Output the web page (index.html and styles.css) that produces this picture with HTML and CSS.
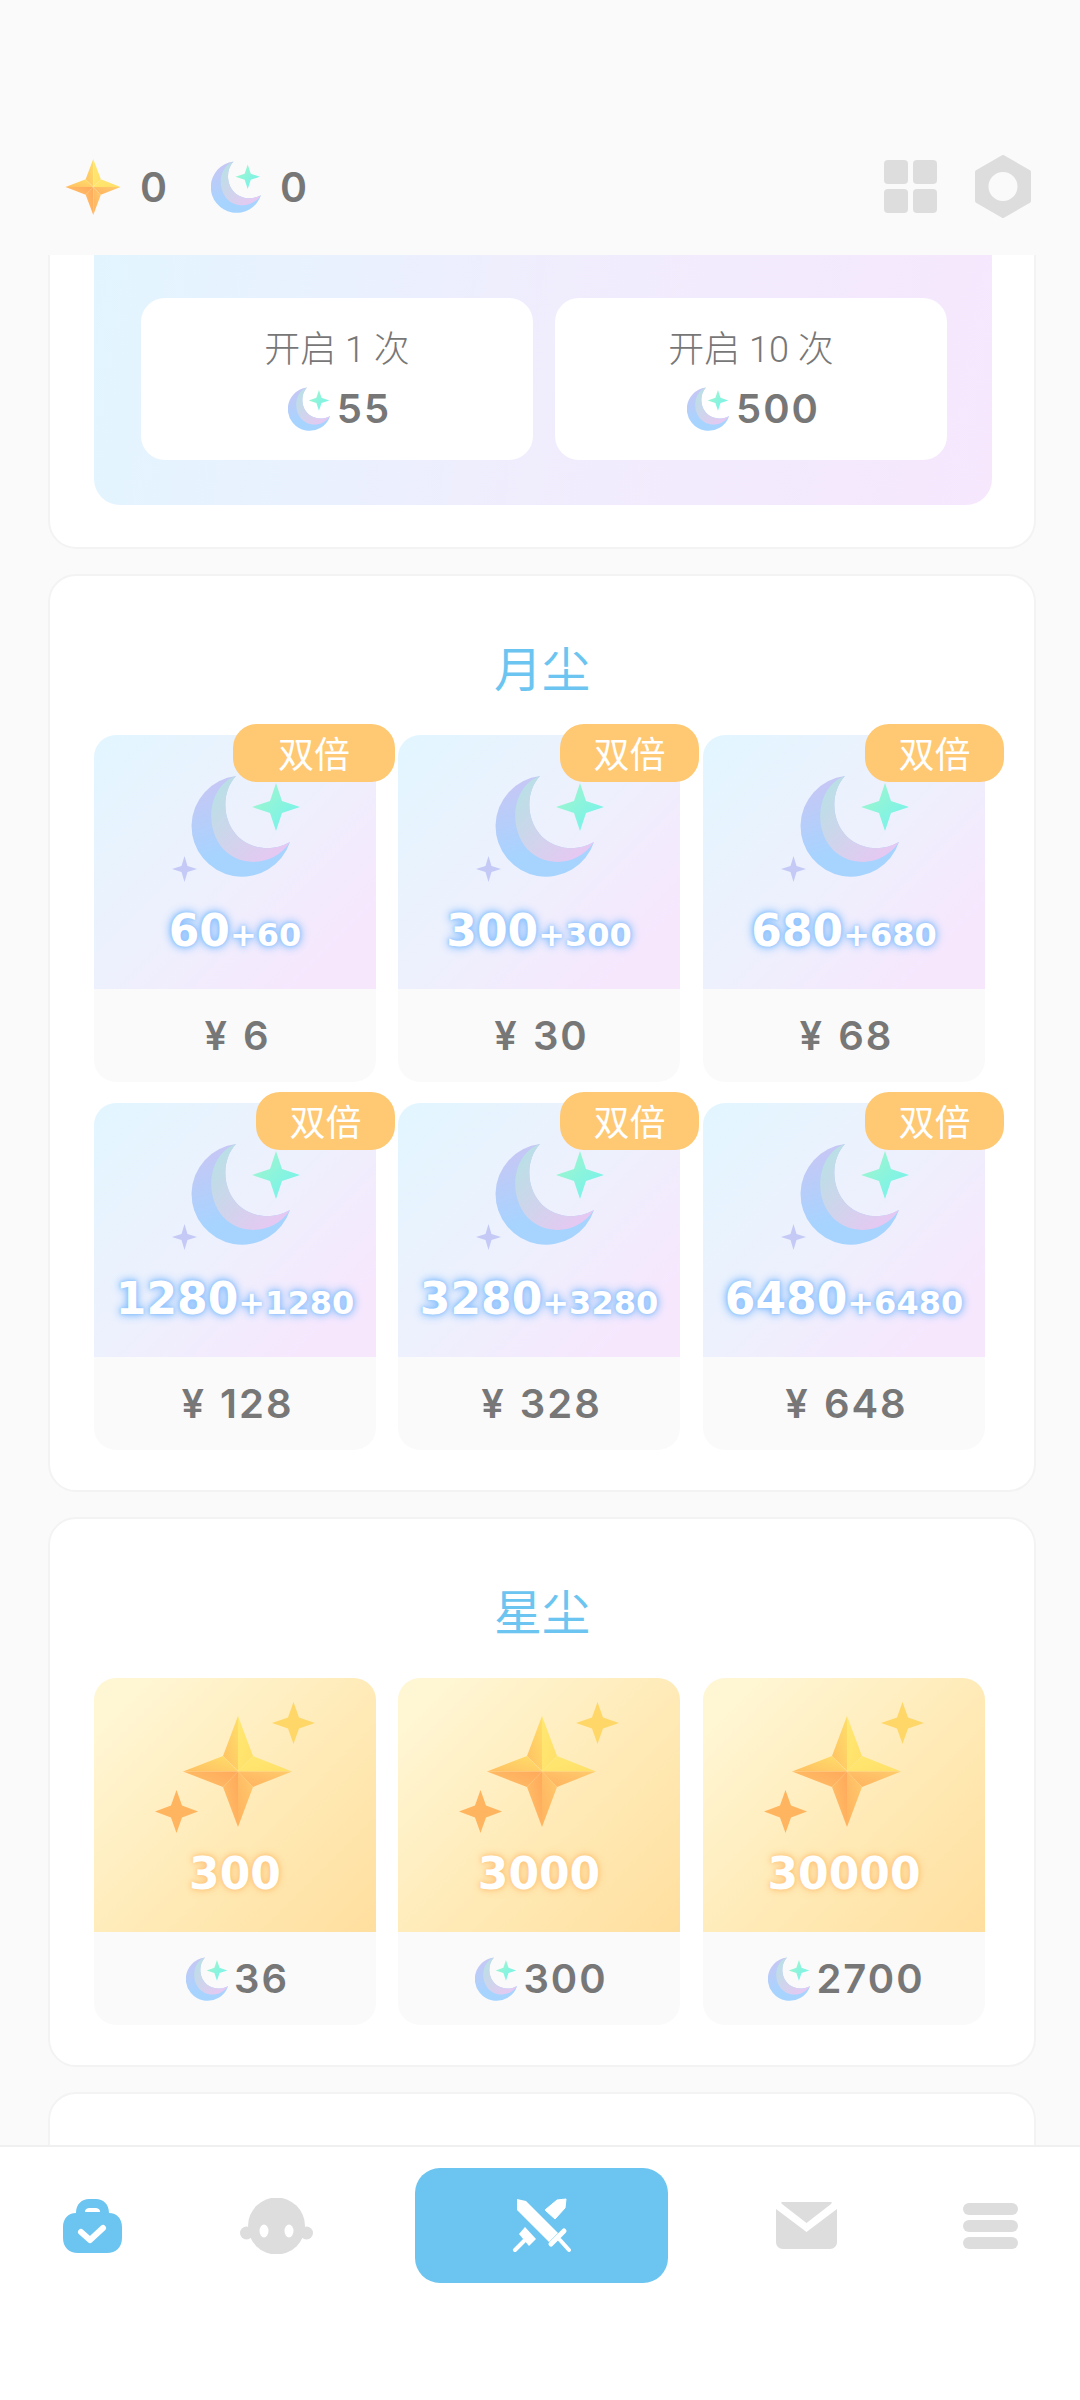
FILE: index.html
```html
<!DOCTYPE html>
<html lang="zh-CN">
<head>
    <meta charset="UTF-8">
    <meta name="viewport" content="width=device-width, initial-scale=1.0">
    <title>商店</title>
    <link rel="stylesheet" href="styles.css">
</head>
<body>
    <svg class="defs" aria-hidden="true">
        <defs>
            <linearGradient id="moonOuter" x1="0.2" y1="0" x2="0.5" y2="1">
                <stop offset="0" stop-color="#c9c6f4"/>
                <stop offset="0.75" stop-color="#a6d4ff"/>
            </linearGradient>
            <linearGradient id="moonInner" x1="0.1" y1="0.1" x2="0.85" y2="0.9">
                <stop offset="0" stop-color="#b9e0e6"/>
                <stop offset="1" stop-color="#e6c8f2"/>
            </linearGradient>
            <linearGradient id="spark" x1="0" y1="0" x2="1" y2="1">
                <stop offset="0" stop-color="#a6f6c8"/>
                <stop offset="1" stop-color="#6ff2f2"/>
            </linearGradient>
            <linearGradient id="goldTL" x1="0" y1="1" x2="1" y2="0">
                <stop offset="0" stop-color="#ffbf63"/>
                <stop offset="1" stop-color="#ffde69"/>
            </linearGradient>
            <linearGradient id="goldTR" x1="0" y1="0" x2="1" y2="1">
                <stop offset="0" stop-color="#ffe872"/>
                <stop offset="1" stop-color="#ffdf68"/>
            </linearGradient>
            <linearGradient id="goldBL" x1="1" y1="0" x2="0" y2="0.6">
                <stop offset="0" stop-color="#ffa95b"/>
                <stop offset="1" stop-color="#ffbe66"/>
            </linearGradient>
            <linearGradient id="goldBR" x1="1" y1="0" x2="0" y2="1">
                <stop offset="0" stop-color="#ffca6c"/>
                <stop offset="1" stop-color="#ffb25f"/>
            </linearGradient>
            <path id="moonBody" d="M64 1A50.5 50.5 0 1 0 118 67C102 76 84 75 70 65C50 50 48 18 64 1Z" fill="url(#moonOuter)"/>
            <path id="moonLayer" d="M64 1C40 9 31 45 48 70C63 92 100 94 118 67C102 76 84 75 70 65C50 50 48 18 64 1Z" fill="url(#moonInner)"/>
            <path id="sparkShape" d="M24 0L30 18L48 24L30 30L24 48L18 30L0 24L18 18Z"/>
            <symbol id="moonArt" viewBox="0 0 130 107">
                <use href="#moonBody"/>
                <use href="#moonLayer"/>
                <use href="#sparkShape" x="80" y="8" fill="url(#spark)"/>
                <path d="M12.5 81L15.5 91L25 94L15.5 97L12.5 107L9.5 97L0 94L9.5 91Z" fill="#c4c9f6"/>
            </symbol>
            <symbol id="moonIcon" viewBox="20 0 100 102">
                <use href="#moonBody"/>
                <use href="#moonLayer"/>
                <use href="#sparkShape" x="68" y="7" fill="url(#spark)"/>
            </symbol>
            <g id="goldStar">
                <path d="M55 0L40 40L55 55Z" fill="url(#goldTL)"/>
                <path d="M0 55.500L40 40L55 55.500Z" fill="url(#goldTL)"/>
                <path d="M55 0L70 40L55 55.500Z" fill="url(#goldTR)"/>
                <path d="M109 55.500L70 40L55 55.500Z" fill="url(#goldTR)"/>
                <path d="M0 55.500L40 71L55 55.500Z" fill="url(#goldBL)"/>
                <path d="M55 111L40 71L55 55.500Z" fill="url(#goldBL)"/>
                <path d="M109 55.500L70 71L55 55.500Z" fill="url(#goldBR)"/>
                <path d="M55 111L70 71L55 55.500Z" fill="url(#goldBR)"/>
            </g>
            <symbol id="starArt" viewBox="0 0 160 131">
                <use href="#goldStar" x="28" y="14"/>
                <path d="M138.500 0L144 15.500L160 21L144 26.500L138.500 42L133 26.500L117 21L133 15.500Z" fill="#ffd768"/>
                <path d="M21.500 88L27 103.500L43 109.500L27 115.500L21.500 131L16 115.500L0 109.500L16 103.500Z" fill="#ffb45f"/>
            </symbol>
            <symbol id="starIcon" viewBox="0 0 109 111">
                <use href="#goldStar"/>
            </symbol>
        </defs>
    </svg>

    <header class="top-bar">
        <div class="balances">
            <svg class="icon-star"><use href="#starIcon"/></svg>
            <span class="balance">0</span>
            <svg class="icon-moon"><use href="#moonIcon"/></svg>
            <span class="balance">0</span>
        </div>
        <div class="top-actions">
            <div class="grid-icon"><i></i><i></i><i></i><i></i></div>
            <svg class="hex-icon" viewBox="0 0 56 63">
                <path fill-rule="evenodd" fill="#dddddd" stroke="#dddddd" stroke-width="4" stroke-linejoin="round" d="M28 2L54 17V46L28 61L2 46V17ZM28 15A16.500 16.500 0 1 0 28 48A16.500 16.500 0 1 0 28 15Z"/>
            </svg>
        </div>
    </header>

    <main class="shop">
        <section class="card card-cut">
            <div class="open-box">
                <div class="open-btn">
                    <div class="open-label">开启 1 次</div>
                    <div class="cost"><svg class="icon-cost"><use href="#moonIcon"/></svg>55</div>
                </div>
                <div class="open-btn">
                    <div class="open-label">开启 10 次</div>
                    <div class="cost"><svg class="icon-cost"><use href="#moonIcon"/></svg>500</div>
                </div>
            </div>
        </section>

        <section class="card">
            <h2 class="card-title">月尘</h2>
            <div class="tiles">
                <div class="tile">
                    <span class="badge badge-wide">双倍</span>
                    <div class="tile-art moon-bg">
                        <svg class="art-moon"><use href="#moonArt"/></svg>
                        <div class="amount amount-moon">60<small>+60</small></div>
                    </div>
                    <div class="tile-foot">¥ 6</div>
                </div>
                <div class="tile">
                    <span class="badge">双倍</span>
                    <div class="tile-art moon-bg">
                        <svg class="art-moon"><use href="#moonArt"/></svg>
                        <div class="amount amount-moon">300<small>+300</small></div>
                    </div>
                    <div class="tile-foot">¥ 30</div>
                </div>
                <div class="tile">
                    <span class="badge">双倍</span>
                    <div class="tile-art moon-bg">
                        <svg class="art-moon"><use href="#moonArt"/></svg>
                        <div class="amount amount-moon">680<small>+680</small></div>
                    </div>
                    <div class="tile-foot">¥ 68</div>
                </div>
                <div class="tile">
                    <span class="badge">双倍</span>
                    <div class="tile-art moon-bg">
                        <svg class="art-moon"><use href="#moonArt"/></svg>
                        <div class="amount amount-moon">1280<small>+1280</small></div>
                    </div>
                    <div class="tile-foot">¥ 128</div>
                </div>
                <div class="tile">
                    <span class="badge">双倍</span>
                    <div class="tile-art moon-bg">
                        <svg class="art-moon"><use href="#moonArt"/></svg>
                        <div class="amount amount-moon">3280<small>+3280</small></div>
                    </div>
                    <div class="tile-foot">¥ 328</div>
                </div>
                <div class="tile">
                    <span class="badge">双倍</span>
                    <div class="tile-art moon-bg">
                        <svg class="art-moon"><use href="#moonArt"/></svg>
                        <div class="amount amount-moon">6480<small>+6480</small></div>
                    </div>
                    <div class="tile-foot">¥ 648</div>
                </div>
            </div>
        </section>

        <section class="card">
            <h2 class="card-title">星尘</h2>
            <div class="tiles">
                <div class="tile">
                    <div class="tile-art star-bg">
                        <svg class="art-star"><use href="#starArt"/></svg>
                        <div class="amount amount-star">300</div>
                    </div>
                    <div class="tile-foot"><div class="cost"><svg class="icon-cost"><use href="#moonIcon"/></svg>36</div></div>
                </div>
                <div class="tile">
                    <div class="tile-art star-bg">
                        <svg class="art-star"><use href="#starArt"/></svg>
                        <div class="amount amount-star">3000</div>
                    </div>
                    <div class="tile-foot"><div class="cost"><svg class="icon-cost"><use href="#moonIcon"/></svg>300</div></div>
                </div>
                <div class="tile">
                    <div class="tile-art star-bg">
                        <svg class="art-star"><use href="#starArt"/></svg>
                        <div class="amount amount-star">30000</div>
                    </div>
                    <div class="tile-foot"><div class="cost"><svg class="icon-cost"><use href="#moonIcon"/></svg>2700</div></div>
                </div>
            </div>
        </section>

        <section class="card card-next"></section>
    </main>

    <nav class="bottom-nav">
        <div class="nav-item">
            <svg class="nav-bag" viewBox="0 0 59 54">
                <path fill="#6cc5f0" d="M13 14C13 5 19 0 26 0H33C40 0 46 5 46 14C54 14 59 20 59 28V39C59 48 53 54 44 54H15C6 54 0 48 0 39V28C0 20 5 14 13 14Z"/>
                <path fill="#ffffff" d="M22 13C22 10 24 9 27 9H32C35 9 37 10 37 13Z"/>
                <path fill="none" stroke="#ffffff" stroke-width="6" stroke-linecap="round" stroke-linejoin="round" d="M18 33L27 41L40 29"/>
            </svg>
        </div>
        <div class="nav-item">
            <svg class="nav-face" viewBox="0 0 73 56">
                <circle cx="36.500" cy="28" r="28.500" fill="#dddddd"/>
                <circle cx="6.500" cy="35" r="6.500" fill="#dddddd"/>
                <circle cx="66.500" cy="35" r="6.500" fill="#dddddd"/>
                <ellipse cx="24" cy="33" rx="4.500" ry="6.500" fill="#ffffff"/>
                <ellipse cx="49" cy="33" rx="4.500" ry="6.500" fill="#ffffff"/>
            </svg>
        </div>
        <div class="nav-item">
            <div class="nav-active">
                <svg class="nav-swords" viewBox="0 0 59 55">
                    <path fill="#ffffff" d="M5 1L14 3L46 35L37 44L5 12Z"/>
                    <path fill="#ffffff" stroke="#ffffff" stroke-linejoin="round" d="M54 1L45 2L33 12L43 21L53 10Z"/>
                    <path fill="#ffffff" d="M7 36L13 29L24 41L17 48Z"/>
                    <path fill="none" stroke="#ffffff" stroke-width="5" stroke-linecap="round" d="M52 33L39 46"/>
                    <path fill="none" stroke="#ffffff" stroke-width="4" stroke-linecap="round" d="M48 42L57 52M13 42L3 52"/>
                </svg>
            </div>
        </div>
        <div class="nav-item">
            <svg class="nav-mail" viewBox="0 0 61 47">
                <path fill="#dddddd" d="M6 0H55C56 0 56 1 55 2L30.500 21L6 2C5 1 5 0 6 0Z"/>
                <path fill="#dddddd" d="M0 7L30.500 30L61 7V40C61 44 58 47 54 47H7C3 47 0 44 0 40Z"/>
            </svg>
        </div>
        <div class="nav-item">
            <div class="menu-icon"><i></i><i></i><i></i></div>
        </div>
    </nav>
</body>
</html>
```

FILE: styles.css
```css
* {
    box-sizing: border-box;
}
body {
    margin: 0;
    width: 1080px;
    height: 2400px;
    overflow: hidden;
    background-color: #fafafa;
    color: #777777;
    font-family: "Inter", "Noto Sans CJK SC", sans-serif;
    display: flex;
    flex-direction: column;
}
.defs {
    position: absolute;
    width: 0;
    height: 0;
}

/* top bar */
.top-bar {
    height: 255px;
    flex: none;
    padding: 155px 49px 0 64px;
    display: flex;
    justify-content: space-between;
    align-items: flex-start;
}
.balances {
    height: 62px;
    margin-top: 1px;
    display: flex;
    align-items: center;
}
.icon-star {
    width: 58px;
    height: 56px;
}
.icon-moon {
    width: 51px;
    height: 52px;
    margin-left: 47px;
}
.balance {
    font-size: 41px;
    font-weight: 600;
    margin-left: 18px;
    width: 24px;
}
.top-actions {
    display: flex;
    align-items: center;
    gap: 38px;
}
.grid-icon {
    width: 53px;
    height: 53px;
    display: grid;
    grid-template-columns: 24px 24px;
    grid-template-rows: 24px 24px;
    gap: 5px;
}
.grid-icon i {
    background-color: #dddddd;
    border-radius: 4px;
}
.hex-icon {
    width: 56px;
    height: 63px;
}

/* cards */
.shop {
    flex: 1;
    overflow: hidden;
    display: flex;
    flex-direction: column;
    gap: 25px;
}
.card {
    flex: none;
    width: 988px;
    margin-left: 48px;
    padding: 54px 44px 40px;
    background-color: #fff;
    border: 2px solid #f3f3f3;
    border-radius: 28px;
}
.card-cut {
    height: 294px;
    padding: 0 42px 0 44px;
    border-top: 0;
    border-radius: 0 0 28px 28px;
}
.card-next {
    height: 200px;
}
.card-title {
    margin: 0 0 33px;
    height: 72px;
    line-height: 72px;
    font-size: 48px;
    font-weight: 400;
    text-align: center;
    color: #6cc5f0;
    font-family: "Noto Sans CJK SC", sans-serif;
}

/* open buttons */
.open-box {
    height: 250px;
    padding: 43px 45px 0 47px;
    display: flex;
    gap: 22px;
    background: linear-gradient(100deg, #e2f5ff 0%, #f0edfd 50%, #f6e7fd 100%);
    border-radius: 0 0 26px 26px;
}
.open-btn {
    flex: 1;
    height: 162px;
    background-color: #fff;
    border-radius: 24px;
    display: flex;
    flex-direction: column;
    align-items: center;
    padding-top: 25px;
}
.open-label {
    font-family: "Roboto", "Noto Sans CJK SC", sans-serif;
    font-size: 36px;
    font-weight: 300;
    line-height: 54px;
    margin-bottom: 8px;
}
.cost {
    display: flex;
    align-items: center;
    gap: 6px;
    padding-left: 5px;
    font-size: 40px;
    font-weight: 600;
    letter-spacing: 2px;
    line-height: 48px;
}
.icon-cost {
    width: 43px;
    height: 44px;
}

/* tiles */
.tiles {
    display: grid;
    grid-template-columns: 304px 305px 282px;
    row-gap: 21px;
}
.tile {
    position: relative;
    width: 282px;
    height: 347px;
    display: flex;
    flex-direction: column;
}
.tile-art {
    height: 254px;
    border-radius: 22px 22px 0 0;
    display: flex;
    flex-direction: column;
    align-items: center;
}
.moon-bg {
    background: linear-gradient(135deg, #e2f6ff 0%, #eef0fd 50%, #f6e7fd 85%);
    padding-top: 40px;
}
.star-bg {
    background: linear-gradient(135deg, #fff6d3 10%, #ffe9b4 60%, #ffdf9f 100%);
    padding-top: 24px;
}
.art-moon {
    width: 130px;
    height: 107px;
    margin-left: 3px;
}
.art-star {
    width: 160px;
    height: 131px;
}
.amount {
    font-family: "DejaVu Sans", sans-serif;
    font-weight: 700;
    font-size: 44px;
    line-height: 50px;
    color: #fff;
    white-space: nowrap;
}
.amount small {
    font-size: 32px;
}
.amount-moon {
    margin-top: 24px;
    text-shadow: 0 0 3px #8cc2ff, 0 0 7px #8cc2ff, 0 0 11px #8cc2ff;
}
.amount-star {
    margin-top: 16px;
    text-shadow: 0 0 4px #ffc47a, 0 0 9px #ffc47a;
}
.tile-foot {
    flex: 1;
    padding-left: 5px;
    background-color: #fafafa;
    border-radius: 0 0 22px 22px;
    display: flex;
    align-items: center;
    justify-content: center;
    font-size: 40px;
    font-weight: 600;
    letter-spacing: 2px;
    word-spacing: 2px;
}
.tile-foot .cost {
    gap: 5px;
    padding-left: 0;
}
.badge {
    position: absolute;
    top: -11px;
    right: -19px;
    width: 139px;
    height: 58px;
    line-height: 56px;
    text-align: center;
    font-family: "Noto Sans CJK SC", sans-serif;
    font-size: 36px;
    letter-spacing: 0;
    color: #fff;
    background-color: #ffc872;
    border-radius: 24px;
}
.badge-wide {
    width: 162px;
}

/* bottom nav */
.bottom-nav {
    height: 255px;
    flex: none;
    padding-top: 21px;
    background-color: #fff;
    border-top: 2px solid #f0f0f0;
    display: grid;
    grid-template-columns: 184px 184px 346px 184px 184px;
    align-items: start;
}
.nav-item {
    height: 115px;
    display: flex;
    align-items: center;
    justify-content: center;
}
.nav-active {
    width: 253px;
    height: 115px;
    background-color: #6cc5f0;
    border-radius: 25px;
    display: flex;
    align-items: center;
    justify-content: center;
}
.nav-bag {
    width: 59px;
    height: 54px;
}
.nav-face {
    width: 73px;
    height: 56px;
}
.nav-swords {
    width: 59px;
    height: 55px;
}
.nav-mail {
    width: 61px;
    height: 47px;
}
.menu-icon {
    width: 55px;
    display: flex;
    flex-direction: column;
    gap: 5px;
}
.menu-icon i {
    height: 12px;
    background-color: #dddddd;
    border-radius: 6px;
}
```
